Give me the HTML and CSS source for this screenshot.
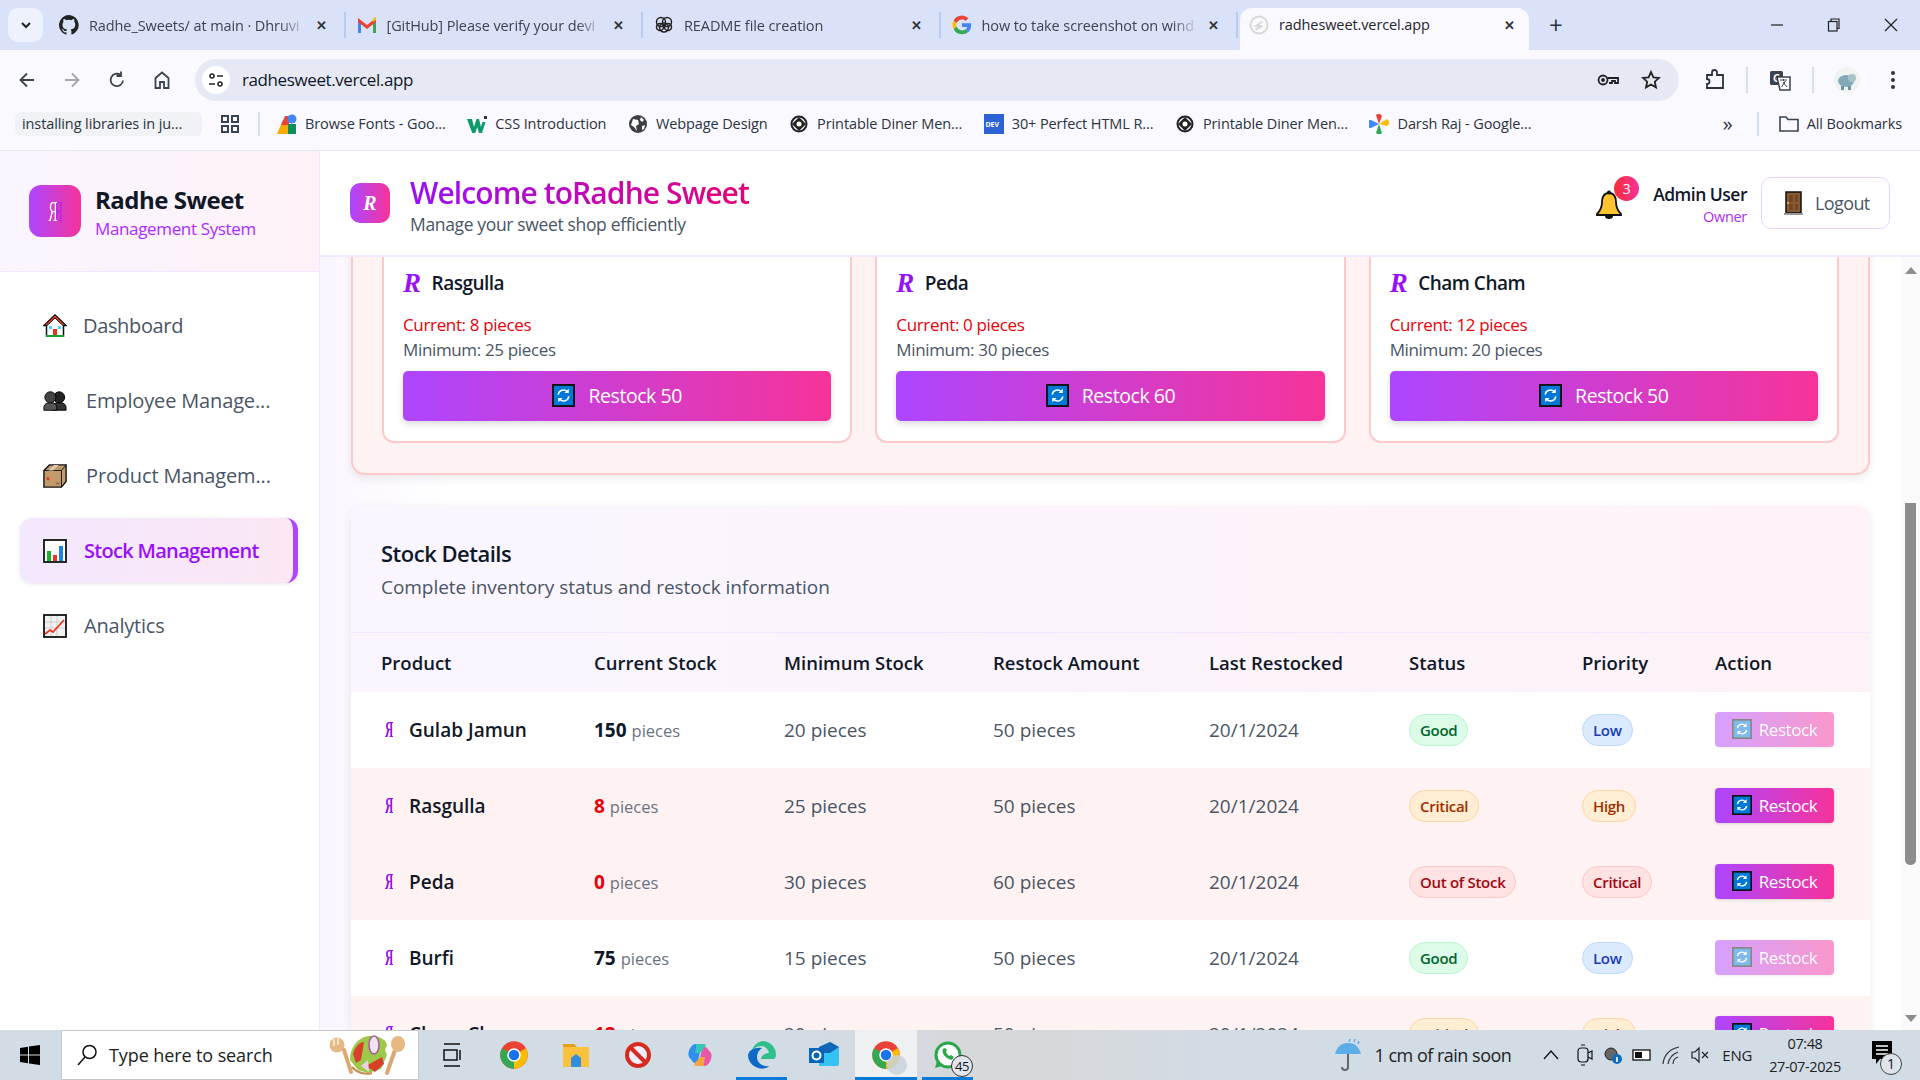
FILE: index.html
```html
<!DOCTYPE html>
<html>

<head>
    <title>Radhe Sweet</title>
    <link rel="stylesheet" href="styles.css">
</head>

<body>
    <svg class="defs" width="0" height="0">
        <symbol id="i-restock" viewBox="0 0 24 24">
            <rect x="1" y="1" width="22" height="22" fill="#0078d7" stroke="#111" stroke-width="2"/>
            <path d="M6.5 11a5.5 5.5 0 0 1 9.5-3M17.5 13a5.5 5.5 0 0 1-9.5 3" fill="none" stroke="#fff" stroke-width="1.6"/>
            <path d="M17.5 5v4.5H13zM6.5 19v-4.5H11z" fill="#fff"/>
        </symbol>
        <symbol id="i-chrome" viewBox="0 0 24 24">
            <circle cx="12" cy="12" r="11" fill="#ea4335"/>
            <path d="M12 12 21.5 6.5A11 11 0 0 1 12 23z" fill="#fbbc04"/>
            <path d="M12 12 12 23A11 11 0 0 1 2.5 6.5z" fill="#34a853"/>
            <circle cx="12" cy="12" r="5.4" fill="#fff"/>
            <circle cx="12" cy="12" r="4.2" fill="#1a73e8"/>
        </symbol>
        <symbol id="i-diner" viewBox="0 0 20 20">
            <circle cx="10" cy="10" r="7.5" fill="none" stroke="#222" stroke-width="2"/>
            <path d="M10 3 17 10 10 17 3 10z" fill="#222"/>
            <circle cx="10" cy="10" r="2.5" fill="#fff"/>
        </symbol>
    </svg>

    <div class="tabstrip">
        <button class="tab-menu"><svg width="14" height="14" viewBox="0 0 14 14"><path d="M3 5l4 4 4-4" fill="none" stroke="#222" stroke-width="2"/></svg></button>
        <div class="tab">
            <svg class="favicon" viewBox="0 0 16 16"><path fill="#222" d="M8 0a8 8 0 0 0-2.5 15.6c.4.1.5-.2.5-.4v-1.4c-2.2.5-2.7-1-2.7-1-.4-.9-.9-1.2-.9-1.2-.7-.5.1-.5.1-.5.8.1 1.2.8 1.2.8.7 1.2 1.9.9 2.3.7.1-.5.3-.9.5-1.1-1.8-.2-3.7-.9-3.700-4 0-.9.3-1.600.8-2.100-.1-.2-.4-1 .1-2.100 0 0 .7-.2 2.200.8a7.600 7.600 0 0 1 4 0c1.500-1 2.200-.8 2.200-.8.400 1.100.2 1.900.1 2.100.5.600.8 1.300.8 2.100 0 3.100-1.900 3.700-3.700 3.900.3.300.6.800.6 1.500v2.200c0 .2.100.5.600.4A8 8 0 0 0 8 0z"/></svg>
            <span class="tab-title">Radhe_Sweets/ at main · Dhruvi</span>
            <span class="tab-close">✕</span>
        </div>
        <div class="tab">
            <svg class="favicon" viewBox="0 0 20 16"><path fill="#4285f4" d="M1 16V3l3 2v11z"/><path fill="#34a853" d="M16 16V5l3-2v13z"/><path fill="#ea4335" d="M1 1l9 7 9-7v4l-9 7-9-7z"/><path fill="#fbbc04" d="M16 1.5 19 0v3l-3 2z"/></svg>
            <span class="tab-title">[GitHub] Please verify your devi</span>
            <span class="tab-close">✕</span>
        </div>
        <div class="tab">
            <svg class="favicon" viewBox="0 0 20 20" fill="none" stroke="#222" stroke-width="1.5"><circle cx="7" cy="7" r="4.5"/><circle cx="13" cy="7" r="4.5"/><circle cx="10" cy="12.5" r="4.5"/><circle cx="6" cy="12" r="3.5"/><circle cx="14" cy="12" r="3.5"/></svg>
            <span class="tab-title">README file creation</span>
            <span class="tab-close">✕</span>
        </div>
        <div class="tab">
            <svg class="favicon" viewBox="0 0 24 24"><path fill="#4285f4" d="M23 12.3c0-.8-.1-1.6-.2-2.3H12v4.3h6.2a5.3 5.3 0 0 1-2.3 3.5l3.6 2.8c2.2-2 3.500-5 3.500-8.300z"/><path fill="#34a853" d="M12 23c3 0 5.500-1 7.500-2.700l-3.600-2.800c-1 .7-2.300 1.100-3.900 1.100-3 0-5.500-2-6.400-4.700l-3.700 2.900A11 11 0 0 0 12 23z"/><path fill="#fbbc04" d="M5.600 13.900a6.600 6.600 0 0 1 0-4.200L1.900 6.800a11 11 0 0 0 0 9.900z"/><path fill="#ea4335" d="M12 5.400c1.700 0 3.200.6 4.300 1.700l3.300-3.200A11 11 0 0 0 1.900 6.800l3.700 2.900C6.500 7.400 9 5.400 12 5.400z"/></svg>
            <span class="tab-title">how to take screenshot on wind</span>
            <span class="tab-close">✕</span>
        </div>
        <div class="tab tab-active">
            <svg class="favicon" viewBox="0 0 20 20" fill="none" stroke="#d8d8d8" stroke-width="2"><circle cx="10" cy="10" r="8.5"/><path d="M13.5 6.5 7 11h6l-6.500 3.500"/></svg>
            <span class="tab-title">radhesweet.vercel.app</span>
            <span class="tab-close">✕</span>
        </div>
        <span class="tab-new">+</span>
        <div class="win-controls">
            <svg width="14" height="14" viewBox="0 0 14 14"><path d="M1 7h12" stroke="#222" stroke-width="1.2"/></svg>
            <svg width="14" height="14" viewBox="0 0 14 14" fill="none" stroke="#222" stroke-width="1.2"><rect x="1.5" y="3.5" width="8.5" height="9.5"/><path d="M4 3.5V1h8v9.5h-2"/></svg>
            <svg width="14" height="14" viewBox="0 0 14 14"><path d="M1 1l12 12M13 1 1 13" stroke="#222" stroke-width="1.2"/></svg>
        </div>
    </div>

    <div class="toolbar">
        <div class="nav-buttons">
            <svg width="20" height="20" viewBox="0 0 20 20" fill="none" stroke="#3c4350" stroke-width="1.8"><path d="M17 10H4M10 3.5 3.5 10l6.500 6.500"/></svg>
            <svg width="20" height="20" viewBox="0 0 20 20" fill="none" stroke="#a3a6ad" stroke-width="1.8"><path d="M3 10h13M10 3.5l6.500 6.500-6.500 6.500"/></svg>
            <svg width="20" height="20" viewBox="0 0 20 20" fill="none" stroke="#3c4350" stroke-width="1.8"><path d="M16 10.5A6.2 6.2 0 1 1 13.5 5"/><path d="M14 1.5V6H9.5" /></svg>
            <svg width="20" height="20" viewBox="0 0 20 20" fill="none" stroke="#3c4350" stroke-width="1.8"><path d="M3.5 18V8L10 2.5 16.5 8v10H12v-6H8v6z"/></svg>
        </div>
        <div class="omnibox">
            <span class="site-info"><svg width="16" height="16" viewBox="0 0 16 16" fill="none" stroke="#222" stroke-width="1.5"><circle cx="4" cy="4" r="2"/><path d="M9 4h6M1 12h6"/><circle cx="12" cy="12" r="2"/></svg></span>
            <span class="url">radhesweet.vercel.app</span>
            <svg class="omni-icon" width="24" height="20" viewBox="0 0 24 20" fill="none" stroke="#222" stroke-width="1.8"><circle cx="7" cy="10" r="4.5"/><circle cx="7" cy="10" r="1"/><path d="M11.5 8H22v5h-3v-2h-3v2h-3"/></svg>
            <svg class="omni-icon" width="20" height="20" viewBox="0 0 20 20" fill="none" stroke="#222" stroke-width="1.8"><path d="M10 2l2.400 5.300 5.600.6-4.200 3.800 1.200 5.700-5-2.900-5 2.900 1.200-5.700L2 7.900l5.600-.6z"/></svg>
        </div>
        <div class="browser-actions">
            <svg width="22" height="22" viewBox="0 0 22 22" fill="none" stroke="#2c3340" stroke-width="1.8"><path d="M3 6h5V3.500a2 2 0 0 1 5 0V6h6v13H3v-4a2.500 2.500 0 0 0 0-5z"/></svg>
            <i class="action-sep"></i>
            <svg width="24" height="24" viewBox="0 0 24 24"><rect x="2" y="3" width="13" height="14" rx="1.5" fill="#3c4350"/><text class="svg-label" x="5" y="14" fill="#fff">G</text><path d="M9 9h13v13H12z" fill="#fff" stroke="#3c4350" stroke-width="1.5"/><path d="M12 12h7M15.5 11v2M13.5 19l4-6M15 14l4 5" stroke="#3c4350" fill="none"/></svg>
            <i class="action-sep"></i>
            <svg width="26" height="26" viewBox="0 0 26 26"><circle cx="13" cy="13" r="13" fill="#f1f3f1"/><ellipse cx="12" cy="14" rx="8" ry="6" fill="#83a9b8"/><circle cx="18" cy="11" r="4" fill="#a9c4c9"/><path d="M7 19h3v4H7zM14 19h3v4h-3z" fill="#6c94a6"/></svg>
            <svg class="menu-dots" width="6" height="20" viewBox="0 0 6 20" fill="#2c3340"><circle cx="3" cy="3" r="2"/><circle cx="3" cy="10" r="2"/><circle cx="3" cy="17" r="2"/></svg>
        </div>
    </div>

    <div class="bookmarks">
        <span class="bm-chip">installing libraries in ju...</span>
        <svg class="bm-apps" width="20" height="20" viewBox="0 0 20 20" fill="none" stroke="#3c4350" stroke-width="2"><rect x="2" y="2" width="6" height="6"/><rect x="12" y="2" width="6" height="6"/><rect x="2" y="12" width="6" height="6"/><rect x="12" y="12" width="6" height="6"/></svg>
        <i class="bm-sep"></i>
        <span class="bm"><svg class="bm-icon" viewBox="0 0 20 20"><path d="M0 20 6 6h5v14z" fill="#f9ab00"/><path d="M4 11 8 2h4v9z" fill="#ea4335"/><circle cx="15" cy="5" r="4.5" fill="#4285f4"/><path d="M11 10h8v10h-8z" fill="#0d8e5b"/></svg>Browse Fonts - Goo...</span>
        <span class="bm"><svg class="bm-icon" viewBox="0 0 20 20"><path d="M0 5h5l2 8 2.500-8h2.500l2 8 1.500-5h3l-3.500 11h-3l-1.800-6-2 6h-3z" fill="#0d9a6a"/><path d="M17 2h3v3h-3z" fill="#333"/></svg>CSS Introduction</span>
        <span class="bm"><svg class="bm-icon" viewBox="0 0 20 20"><circle cx="10" cy="10" r="9" fill="#3c4043"/><path d="M5 5l5 1 1 4-3 2 1 5-3-4-3-2zM13 3l3 3-2 2-2-2zM14 12l3-1-1 4-2 1z" fill="#fff"/></svg>Webpage Design</span>
        <span class="bm"><svg class="bm-icon"><use href="#i-diner"/></svg>Printable Diner Men...</span>
        <span class="bm"><svg class="bm-icon" viewBox="0 0 20 20"><rect width="20" height="20" fill="#2f62d6"/><text class="svg-dev" x="1.5" y="13" fill="#fff">DEV</text></svg>30+ Perfect HTML R...</span>
        <span class="bm"><svg class="bm-icon"><use href="#i-diner"/></svg>Printable Diner Men...</span>
        <span class="bm"><svg class="bm-icon" viewBox="0 0 20 20"><path d="M10 10 7 1a4 4 0 0 1 6 1z" fill="#ea4335"/><path d="M10 10l8-5a4 4 0 0 1 0 7z" fill="#fbbc04"/><path d="M10 10l3 9a4 4 0 0 1-6 0z" fill="#34a853"/><path d="M10 10 2 14a4 4 0 0 1 0-8z" fill="#4285f4"/></svg>Darsh Raj - Google...</span>
        <span class="bm-more">»</span>
        <i class="bm-sep bm-sep-end"></i>
        <span class="bm bm-all"><svg class="bm-icon" viewBox="0 0 20 20" fill="none" stroke="#3c4350" stroke-width="1.6"><path d="M1 17V3h6l2 2.500h10V17z"/></svg>All Bookmarks</span>
    </div>

    <div class="app">
        <aside class="sidebar">
            <div class="side-head">
                <div class="side-logo"><span class="mark-mirror">Я</span></div>
                <div class="side-titles">
                    <div class="side-name">Radhe Sweet</div>
                    <div class="side-sub">Management System</div>
                </div>
            </div>
            <nav class="side-nav">
                <a class="nav-item">
                    <svg class="nav-icon" viewBox="0 0 24 24"><path d="M12 1 1 11.5h2.500V22h17V11.500H23z" fill="#fff" stroke="#111" stroke-width="1.5"/><path d="M12 1 1 11.500h3L12 4l8 7.500h3z" fill="#e5371f" stroke="#111"/><path d="M10 15h4v7h-4z" fill="#e5371f"/><path d="M6 12h3v3H6zM15 12h3v3h-3z" fill="#53d3f5"/><path d="M3 21h18v2H3z" fill="#17a02f"/></svg>
                    <span>Dashboard</span>
                </a>
                <a class="nav-item nav-wide">
                    <svg class="nav-icon" viewBox="0 0 26 24"><circle cx="17.5" cy="8" r="6" fill="#222" stroke="#000"/><path d="M10 22v-4a6 6 0 0 1 6-4h4a5 5 0 0 1 5 5v3z" fill="#333" stroke="#000"/><circle cx="8" cy="8" r="6" fill="#444" stroke="#000"/><path d="M1 22v-4a6 6 0 0 1 6-4h3a5 5 0 0 1 5 5v3z" fill="#555" stroke="#000"/></svg>
                    <span>Employee Manage...</span>
                </a>
                <a class="nav-item nav-wide">
                    <svg class="nav-icon" viewBox="0 0 26 26"><path d="M1 7 7 1h18v18l-5 6H1z" fill="#c49a6c" stroke="#111" stroke-width="1.5"/><path d="M1 7h19v18M20 7l5-6" fill="none" stroke="#111"/><path d="M6 7l6-6h5l-6 6z" fill="#d9cdb8"/><path d="M4 14l3 1v3l-3-1z" fill="#e5371f"/><path d="M14 20h4v2h-4z" fill="#8a6a47"/></svg>
                    <span>Product Managem...</span>
                </a>
                <a class="nav-item nav-active">
                    <svg class="nav-icon" viewBox="0 0 24 24"><rect x="1" y="1" width="22" height="22" fill="#fff" stroke="#111" stroke-width="1.8"/><path d="M4 12h4v10H4z" fill="#17b12e"/><path d="M10 16h4v6h-4z" fill="#e5371f"/><path d="M16 7h4v15h-4z" fill="#1a86e0"/></svg>
                    <span>Stock Management</span>
                </a>
                <a class="nav-item nav-last">
                    <svg class="nav-icon" viewBox="0 0 24 24"><rect x="1" y="1" width="22" height="22" fill="#f2f2f2" stroke="#111" stroke-width="1.8"/><path d="M2 8h20M2 14h20M8 2v20M14 2v20" stroke="#ccc"/><path d="M2 20l5-4 3 2 11-12" fill="none" stroke="#e5371f" stroke-width="1.8"/></svg>
                    <span>Analytics</span>
                </a>
            </nav>
        </aside>

        <div class="main">
            <header class="topbar">
                <div class="top-logo">R</div>
                <div class="top-titles">
                    <h1 class="top-title">Welcome toRadhe Sweet</h1>
                    <div class="top-sub">Manage your sweet shop efficiently</div>
                </div>
                <div class="bell">
                    <svg width="28" height="30" viewBox="0 0 28 30"><path d="M14 3c-5 0-7 4-7 9 0 5-2 9-5 12v1h24v-1c-3-3-5-7-5-12 0-5-2-9-7-9z" fill="#fdc32e" stroke="#111" stroke-width="1.8"/><path d="M10 26a4 3 0 0 0 8 0z" fill="#111"/><circle cx="14" cy="2.5" r="2" fill="#111"/></svg>
                    <span class="bell-badge">3</span>
                </div>
                <div class="user">
                    <div class="user-name">Admin User</div>
                    <div class="user-role">Owner</div>
                </div>
                <button class="logout">
                    <svg width="19" height="24" viewBox="0 0 19 24"><path d="M2 1h15v21H2z" fill="#8a5a33" stroke="#111" stroke-width="1.5"/><path d="M5 4h4v7H5zM11 4h3v7h-3zM5 13h4v6H5zM11 13h3v6h-3z" fill="#734623"/><circle cx="4" cy="12" r="1" fill="#f5c242"/><path d="M0 22h19v2H0z" fill="#9a9a9a"/></svg>
                    Logout
                </button>
            </header>

            <div class="body-row">
                <div class="content">
                    <section class="alerts">
                        <div class="alert-card">
                            <div class="alert-name"><span class="alert-r">R</span>Rasgulla</div>
                            <div class="alert-current">Current: 8 pieces</div>
                            <div class="alert-min">Minimum: 25 pieces</div>
                            <button class="alert-btn"><svg class="btn-icon"><use href="#i-restock"/></svg>Restock 50</button>
                        </div>
                        <div class="alert-card">
                            <div class="alert-name"><span class="alert-r">R</span>Peda</div>
                            <div class="alert-current">Current: 0 pieces</div>
                            <div class="alert-min">Minimum: 30 pieces</div>
                            <button class="alert-btn"><svg class="btn-icon"><use href="#i-restock"/></svg>Restock 60</button>
                        </div>
                        <div class="alert-card">
                            <div class="alert-name"><span class="alert-r">R</span>Cham Cham</div>
                            <div class="alert-current">Current: 12 pieces</div>
                            <div class="alert-min">Minimum: 20 pieces</div>
                            <button class="alert-btn"><svg class="btn-icon"><use href="#i-restock"/></svg>Restock 50</button>
                        </div>
                    </section>

                    <section class="stock">
                        <div class="stock-head">
                            <h2 class="stock-title">Stock Details</h2>
                            <p class="stock-sub">Complete inventory status and restock information</p>
                        </div>
                        <table class="stock-table">
                            <thead>
                                <tr>
                                    <th class="col-product">Product</th>
                                    <th class="col-current">Current Stock</th>
                                    <th class="col-min">Minimum Stock</th>
                                    <th class="col-amount">Restock Amount</th>
                                    <th class="col-last">Last Restocked</th>
                                    <th class="col-status">Status</th>
                                    <th class="col-priority">Priority</th>
                                    <th>Action</th>
                                </tr>
                            </thead>
                            <tbody>
                                <tr>
                                    <td><span class="prod"><span class="prod-mark">Я</span>Gulab Jamun</span></td>
                                    <td><b class="qty">150</b> <span class="unit">pieces</span></td>
                                    <td>20 pieces</td>
                                    <td>50 pieces</td>
                                    <td>20/1/2024</td>
                                    <td><span class="pill pill-green">Good</span></td>
                                    <td><span class="pill pill-blue">Low</span></td>
                                    <td><button class="row-btn row-btn-off"><svg class="row-icon"><use href="#i-restock"/></svg>Restock</button></td>
                                </tr>
                                <tr class="row-low">
                                    <td><span class="prod"><span class="prod-mark">Я</span>Rasgulla</span></td>
                                    <td><b class="qty qty-low">8</b> <span class="unit">pieces</span></td>
                                    <td>25 pieces</td>
                                    <td>50 pieces</td>
                                    <td>20/1/2024</td>
                                    <td><span class="pill pill-orange">Critical</span></td>
                                    <td><span class="pill pill-orange">High</span></td>
                                    <td><button class="row-btn"><svg class="row-icon"><use href="#i-restock"/></svg>Restock</button></td>
                                </tr>
                                <tr class="row-low">
                                    <td><span class="prod"><span class="prod-mark">Я</span>Peda</span></td>
                                    <td><b class="qty qty-low">0</b> <span class="unit">pieces</span></td>
                                    <td>30 pieces</td>
                                    <td>60 pieces</td>
                                    <td>20/1/2024</td>
                                    <td><span class="pill pill-red">Out of Stock</span></td>
                                    <td><span class="pill pill-red">Critical</span></td>
                                    <td><button class="row-btn"><svg class="row-icon"><use href="#i-restock"/></svg>Restock</button></td>
                                </tr>
                                <tr>
                                    <td><span class="prod"><span class="prod-mark">Я</span>Burfi</span></td>
                                    <td><b class="qty">75</b> <span class="unit">pieces</span></td>
                                    <td>15 pieces</td>
                                    <td>50 pieces</td>
                                    <td>20/1/2024</td>
                                    <td><span class="pill pill-green">Good</span></td>
                                    <td><span class="pill pill-blue">Low</span></td>
                                    <td><button class="row-btn row-btn-off"><svg class="row-icon"><use href="#i-restock"/></svg>Restock</button></td>
                                </tr>
                                <tr class="row-low">
                                    <td><span class="prod"><span class="prod-mark">Я</span>Cham Cham</span></td>
                                    <td><b class="qty qty-low">12</b> <span class="unit">pieces</span></td>
                                    <td>20 pieces</td>
                                    <td>50 pieces</td>
                                    <td>20/1/2024</td>
                                    <td><span class="pill pill-orange">Critical</span></td>
                                    <td><span class="pill pill-orange">High</span></td>
                                    <td><button class="row-btn"><svg class="row-icon"><use href="#i-restock"/></svg>Restock</button></td>
                                </tr>
                            </tbody>
                        </table>
                    </section>
                </div>
                <div class="scrollbar">
                    <i class="arrow-up"></i>
                    <div class="scroll-track"><div class="scroll-thumb"></div></div>
                    <i class="arrow-down"></i>
                </div>
            </div>
        </div>
    </div>

    <div class="taskbar">
        <svg class="win-logo" width="20" height="20" viewBox="0 0 20 20" fill="#000"><path d="M0 3l8-1.200v7.700H0zM9 1.600 20 0v9.500H9zM0 10.500h8v7.700L0 17zM9 10.500h11V20L9 18.400z"/></svg>
        <div class="search">
            <svg width="24" height="24" viewBox="0 0 24 24" fill="none" stroke="#111" stroke-width="1.5"><circle cx="14.5" cy="9" r="6.5"/><path d="M10 14 3 22"/></svg>
            <span class="search-text">Type here to search</span>
            <svg class="search-art" width="90" height="50" viewBox="0 0 90 50">
                <path d="M20 20 27 42" stroke="#dba873" stroke-width="4" stroke-linecap="round"/>
                <circle cx="13" cy="15" r="7.5" fill="#e6b884"/>
                <path d="M10 9v7M14 8v7" stroke="#fff" stroke-width="1.2"/>
                <path d="M71 20 63 43" stroke="#dba873" stroke-width="4" stroke-linecap="round"/>
                <ellipse cx="74" cy="14" rx="7" ry="8" fill="#e6b884"/>
                <path d="M26 30C26 16 36 5 48 6c6 0 14 3 15 9l-2 5 2 5-6 14-13 4-10-3z" fill="#9cc94a"/>
                <path d="M29 24c2-8 7-12 11-12l-3 18-5 3z" fill="#d8402a"/>
                <path d="M42 36l16-9 2 7-9 8z" fill="#d8402a"/>
                <ellipse cx="50" cy="15" rx="5" ry="9" fill="#f1e3ef" stroke="#a55c9a" stroke-width="1.5"/>
                <path d="M37 36l7-6 1 12z" fill="#e9d4e6"/>
                <path d="M28 37c5 6 14 8 20 6" fill="none" stroke="#c98b52" stroke-width="2"/>
            </svg>
        </div>
        <div class="task-apps">
            <span class="task-app"><svg width="22" height="26" viewBox="0 0 22 26" fill="none" stroke="#111" stroke-width="1.5"><path d="M3 2h16M3 24h16M3 8h13v10H3zM19 8v10"/></svg></span>
            <span class="task-app"><svg width="30" height="30"><use href="#i-chrome"/></svg></span>
            <span class="task-app"><svg width="28" height="28" viewBox="0 0 28 28"><path d="M1 3h11l3 3h12v20H1z" fill="#fcc23d"/><path d="M1 3h11l3 3H1z" fill="#e2a017"/><path d="M9 26V17l5-4 5 4v9z" fill="#2f8fdc"/></svg></span>
            <span class="task-app"><svg width="28" height="28" viewBox="0 0 28 28" fill="none" stroke="#d62c20" stroke-width="4"><circle cx="14" cy="14" r="11" fill="#eef"/><path d="M6 6l16 16"/></svg></span>
            <span class="task-app"><svg width="28" height="28" viewBox="0 0 28 28"><path d="M3 16C1 11 5 3 10 3c3 0 8 0 9 2l-5 6-2 9c-1 3-4 2-5 1z" fill="#2f8ef0"/><path d="M25 12c2 5-2 13-7 13-3 0-8 0-9-2l5-6 2-9c1-3 4-2 5-1z" fill="#e957a8"/><path d="M10 3h8c2 0 2 2 1 3l-5 6H9c1-3 1-7 1-9z" fill="#36c6b8"/><path d="M18 25h-8c-2 0-2-2-1-3l5-6h5c-1 3-1 7-1 9z" fill="#f7a63c"/></svg></span>
            <span class="task-app task-open"><svg width="30" height="30" viewBox="0 0 30 30"><path d="M15 1a14 14 0 0 1 14 14c0 2-1 4-3 4H14c0-3 4-6 8-6-1-4-4-7-8-7-5 0-9 4-10 8A14 14 0 0 1 15 1z" fill="#2ebf8f"/><path d="M1 15a14 14 0 0 0 22 11c-6 1-13-2-13-9 0-4 2-7 5-9C8 7 2 10 1 15z" fill="#0c69c5"/></svg></span>
            <span class="task-app"><svg width="32" height="28" viewBox="0 0 32 28"><path d="M11 6 22 1l9 5v17a2 2 0 0 1-2 2H11z" fill="#35c3f3"/><path d="M11 6 22 1l9 5-9 6H11z" fill="#1166b8"/><rect x="1" y="7" width="15" height="15" fill="#0a64bd"/><circle cx="8.5" cy="14.5" r="4" fill="none" stroke="#fff" stroke-width="2"/></svg></span>
            <span class="task-app task-open task-active"><svg width="30" height="30"><use href="#i-chrome"/></svg><i class="task-thumb"></i></span>
            <span class="task-app task-open"><svg width="30" height="30" viewBox="0 0 30 30"><circle cx="15" cy="15" r="12" fill="#fff" stroke="#2aa84a" stroke-width="3"/><path d="M2 28l2-7 5 5z" fill="#2aa84a"/><path d="M10 9c-2 3 2 10 9 11l2-3-3-2-2 1c-1-1-2-2-3-4l1-2-2-2z" fill="#2aa84a"/></svg><span class="task-count">45</span></span>
        </div>
        <div class="tray">
            <svg class="tray-rain" width="28" height="34" viewBox="0 0 28 34"><path d="M1 16C3 8 8 5 14 5s11 3 13 11z" fill="#5daee8"/><path d="M14 16v13a3 3 0 0 1-6 0" fill="none" stroke="#666" stroke-width="2"/><path d="M16 1l-1 3M21 1l-1 3M25 3l-1 3" stroke="#5daee8" stroke-width="1.5"/></svg>
            <span class="rain-text">1 cm of rain soon</span>
            <svg class="tray-caret" width="18" height="12" viewBox="0 0 18 12" fill="none" stroke="#111" stroke-width="1.3"><path d="M2 10l7-8 7 8"/></svg>
            <svg width="18" height="22" viewBox="0 0 18 22" fill="none" stroke="#111" stroke-width="1.2"><rect x="2" y="4" width="10" height="14" rx="3"/><path d="M12 9l4-2v8l-4-2M5 1h4M5 21h4"/></svg>
            <svg width="20" height="22" viewBox="0 0 20 22"><circle cx="8" cy="10" r="6" fill="#666" stroke="#222"/><circle cx="14" cy="15" r="5" fill="#0f6cbd"/><path d="M14 13v5" stroke="#fff" stroke-width="1.6"/></svg>
            <svg width="20" height="14" viewBox="0 0 20 14"><rect x="1" y="2" width="17" height="10" fill="#fff" stroke="#111" stroke-width="1.3"/><rect x="3" y="4" width="7" height="6" fill="#111"/></svg>
            <svg width="20" height="20" viewBox="0 0 20 20" fill="none" stroke="#333" stroke-width="1.2"><path d="M2 19C3 10 9 4 18 2M7 19c1-6 5-10 10-12M12 19c0-3 2-6 5-7"/></svg>
            <svg width="20" height="20" viewBox="0 0 20 20" fill="none" stroke="#222" stroke-width="1.2"><path d="M2 7h3l4-4v14l-4-4H2zM12 7l6 6M18 7l-6 6"/></svg>
            <span class="tray-lang">ENG</span>
            <div class="clock">
                <div>07:48</div>
                <div>27-07-2025</div>
            </div>
            <span class="notif">
                <svg width="20" height="24" viewBox="0 0 20 24"><path d="M0 0h20v18H8l-4 5v-5H0z" fill="#000"/><path d="M4 5h12M4 9h12M4 13h12" stroke="#fff" stroke-width="1.5"/></svg>
                <span class="notif-count">1</span>
            </span>
        </div>
    </div>
</body>

</html>
```

FILE: styles.css
```css
* {
    box-sizing: border-box;
}

html,
body {
    margin: 0;
    height: 100%;
    overflow: hidden;
}

body {
    display: flex;
    flex-direction: column;
    height: 100vh;
    font-family: "Open Sans", "Noto Sans", sans-serif;
    color: #101828;
}

.defs {
    position: absolute;
}

button {
    font-family: inherit;
    border: 0;
}

h1,
h2,
p {
    margin: 0;
}

/* browser chrome */
.tabstrip {
    display: flex;
    align-items: flex-end;
    height: 50px;
    flex: none;
    padding-left: 8px;
    background: #d9e2f8;
}

.tab-menu {
    display: flex;
    align-items: center;
    justify-content: center;
    width: 35px;
    height: 34px;
    margin: 0 5px 8px 0;
    border-radius: 10px;
    background: #eef2fd;
}

.tab {
    display: flex;
    align-items: center;
    gap: 10px;
    width: 297.5px;
    height: 26px;
    margin-bottom: 12px;
    padding: 0 17px 0 11px;
    border-right: 2px solid #b8ccf2;
    font-size: 14.5px;
    letter-spacing: -0.1px;
    color: #3c4350;
}

.favicon {
    flex: none;
    width: 20px;
    height: 20px;
}

.tab-title {
    flex: 1;
    overflow: hidden;
    white-space: nowrap;
    mask-image: linear-gradient(to right, #000 88%, transparent);
}

.tab-close {
    flex: none;
    font-size: 13px;
    font-weight: 600;
    color: #333;
}

.tab-active {
    width: 289px;
    height: 42px;
    margin: 0 0 0 2px;
    padding: 0 14px 9px 9px;
    border: 0;
    border-radius: 12px 12px 0 0;
    background: #f9f9ff;
    color: #1f2430;
}

.tab-active .tab-title {
    mask-image: none;
}

.tab-new {
    margin: 0 0 10px 20px;
    font-size: 24px;
    line-height: 30px;
    color: #2c3340;
}

.win-controls {
    display: flex;
    gap: 43px;
    margin: 0 22px 18px auto;
}

.toolbar {
    display: flex;
    align-items: center;
    flex: none;
    height: 60px;
    padding: 0 18px 0 17px;
    background: #f9f9ff;
}

.nav-buttons {
    display: flex;
    gap: 25px;
    margin-right: 23px;
}

.omnibox {
    display: flex;
    align-items: center;
    gap: 21px;
    width: 1484px;
    height: 42px;
    padding: 0 18px 0 7px;
    border-radius: 21px;
    background: #e6e9f4;
}

.site-info {
    display: flex;
    align-items: center;
    justify-content: center;
    width: 28px;
    height: 28px;
    margin-right: -9px;
    border-radius: 50%;
    background: #fff;
}

.url {
    flex: 1;
    padding-bottom: 2px;
    font-size: 17px;
    letter-spacing: -0.4px;
}

.browser-actions {
    display: flex;
    align-items: center;
    gap: 20px;
    margin-left: 25px;
}

.menu-dots {
    margin-left: 10px;
}

.action-sep {
    width: 2px;
    height: 26px;
    background: #d4e0f5;
}

.svg-label {
    font-size: 10px;
    font-weight: 700;
}

.svg-dev {
    font-size: 7px;
    font-weight: 700;
}

.bookmarks {
    display: flex;
    align-items: center;
    flex: none;
    height: 40px;
    padding: 0 18px 13px 15px;
    background: #f9f9ff;
    font-size: 14.5px;
    letter-spacing: -0.1px;
    color: #2c3340;
}

.bm-chip {
    width: 187px;
    padding: 2px 0 3px 7px;
    margin-right: 18px;
    border-radius: 6px;
    background: #f0f2f5;
    white-space: nowrap;
}

.bm-apps {
    margin-right: 18px;
}

.bm-sep {
    width: 2px;
    height: 24px;
    margin-right: 17px;
    background: #d4e0f5;
}

.bm {
    display: flex;
    align-items: center;
    gap: 8px;
    margin-right: 21.5px;
    white-space: nowrap;
}

.bm-icon {
    flex: none;
    width: 20px;
    height: 20px;
}

.bm-more {
    margin-left: auto;
    margin-right: 24px;
    font-size: 20px;
    line-height: 20px;
}

.bm-sep-end {
    margin-right: 20px;
}

.bm-all {
    margin-right: 0;
}

/* app shell */
.app {
    display: flex;
    flex: 1;
    min-height: 0;
    border-top: 1px solid #e4e6f0;
}

.sidebar {
    flex: none;
    width: 320px;
    border-right: 1px solid #f3e8ff;
    background: #fff;
}

.side-head {
    display: flex;
    align-items: center;
    gap: 14px;
    height: 121px;
    padding: 0 0 0 29px;
    border-bottom: 1px solid #f3e8ff;
    background: linear-gradient(to right, #faf5ff, #fdf2f8);
}

.side-logo {
    display: flex;
    align-items: center;
    justify-content: center;
    width: 52px;
    height: 52px;
    border-radius: 12px;
    background: linear-gradient(to right, #ad46ff, #f6339a);
}

.mark-mirror {
    display: inline-block;
    margin-left: -4px;
    font-family: "Liberation Serif", serif;
    font-size: 30px;
    line-height: 30px;
    color: #fff;
    transform: scaleX(0.45);
    text-shadow: 12px 0 0 rgba(152, 16, 250, 0.55);
}

.side-titles {
    padding-top: 4px;
}

.side-name {
    font-size: 24px;
    font-weight: 700;
    line-height: 32px;
    letter-spacing: -0.5px;
}

.side-sub {
    font-size: 17px;
    line-height: 26px;
    letter-spacing: -0.35px;
    color: #ad2bff;
}

.side-nav {
    display: flex;
    flex-direction: column;
    gap: 10px;
    padding: 21px 21px 0 20px;
}

.nav-item {
    display: flex;
    align-items: center;
    gap: 16px;
    height: 65px;
    padding-left: 23px;
    font-size: 20px;
    font-weight: 500;
    letter-spacing: -0.35px;
    color: #4a5565;
    white-space: nowrap;
}

.nav-wide {
    gap: 19px;
    letter-spacing: -0.15px;
}

.nav-last {
    gap: 17px;
    letter-spacing: -0.2px;
}

.nav-icon {
    flex: none;
    width: 24px;
    height: 24px;
}

.nav-active {
    gap: 17px;
    border-right: 5px solid #ad46ff;
    border-radius: 12px;
    background: linear-gradient(to right, #f3e8ff, #fce7f3);
    box-shadow: 0 1px 4px rgba(0, 0, 0, 0.1);
    font-weight: 600;
    letter-spacing: -0.7px;
    color: #9810fa;
}

.main {
    display: flex;
    flex-direction: column;
    flex: 1;
    min-width: 0;
    background: #fff;
}

.topbar {
    position: relative;
    z-index: 2;
    display: flex;
    align-items: center;
    flex: none;
    height: 106px;
    padding: 0 30px;
    border-bottom: 2px solid #f3e8ff;
    background: #fff;
}

.top-logo {
    display: flex;
    align-items: center;
    justify-content: center;
    width: 40px;
    height: 40px;
    margin-right: 20px;
    border-radius: 10px;
    background: linear-gradient(to right, #ad46ff, #f6339a);
    font-family: "Liberation Serif", serif;
    font-size: 20px;
    font-style: italic;
    font-weight: 700;
    color: #fff;
}

.top-titles {
    flex: 1;
    padding-top: 4px;
}

.top-title {
    width: max-content;
    font-size: 30px;
    font-weight: 600;
    line-height: 38px;
    letter-spacing: -0.9px;
    background: linear-gradient(to right, #9810fa, #e60076);
    -webkit-background-clip: text;
    background-clip: text;
    color: transparent;
}

.top-sub {
    font-size: 17.5px;
    line-height: 24px;
    letter-spacing: -0.35px;
    color: #4a5565;
}

.bell {
    position: relative;
    width: 30px;
    height: 32px;
    margin: 5px 28px 0 0;
}

.bell-badge {
    position: absolute;
    top: -14px;
    left: 19px;
    width: 25px;
    height: 25px;
    border-radius: 50%;
    background: linear-gradient(to right, #fb2c36, #f6339a);
    font-size: 14px;
    line-height: 25px;
    text-align: center;
    color: #fff;
}

.user {
    margin: 4px 14px 0 0;
    text-align: right;
}

.user-name {
    font-size: 17.5px;
    font-weight: 600;
    line-height: 24px;
    letter-spacing: -0.5px;
}

.user-role {
    font-size: 14.5px;
    line-height: 22px;
    letter-spacing: -0.3px;
    color: #ad2bff;
}

.logout {
    display: flex;
    align-items: center;
    gap: 12px;
    width: 129px;
    height: 52px;
    padding-left: 22px;
    border: 1.5px solid #e9d4ff;
    border-radius: 10px;
    background: #fff;
    font-size: 18px;
    letter-spacing: -0.6px;
    color: #4a5565;
}

.body-row {
    display: flex;
    flex: 1;
    min-height: 0;
}

.content {
    flex: 1;
    min-width: 0;
    overflow: hidden;
    padding: 0 31px;
    background: linear-gradient(to right, #faf5ff, #fff 8%);
}

/* pulled up: the page is scrolled under the top bar */
.alerts {
    display: grid;
    grid-template-columns: repeat(3, 1fr);
    gap: 23px;
    margin-top: -16px;
    padding: 0 29px 30px;
    border: 2px solid #ffc9c9;
    border-top: 0;
    border-radius: 0 0 14px 14px;
    background: #fef2f2;
    box-shadow: 0 4px 8px rgba(0, 0, 0, 0.08);
}

.alert-card {
    padding: 20px 19px;
    border: 2px solid #ffc9c9;
    border-top: 0;
    border-radius: 0 0 12px 12px;
    background: #fff;
}

.alert-name {
    display: flex;
    align-items: center;
    gap: 11px;
    height: 44px;
    margin-bottom: 6.5px;
    font-size: 19px;
    font-weight: 600;
    letter-spacing: -0.5px;
}

.alert-r {
    font-family: "Liberation Serif", serif;
    font-size: 27px;
    font-style: italic;
    font-weight: 700;
    color: #9810fa;
}

.alert-current,
.alert-min {
    font-size: 17px;
    line-height: 25.5px;
    letter-spacing: -0.35px;
    color: #4a5565;
}

.alert-current {
    color: #e7000b;
}

.alert-btn {
    display: flex;
    align-items: center;
    justify-content: center;
    gap: 13px;
    width: 100%;
    height: 50px;
    margin-top: 8px;
    border-radius: 5px;
    background: linear-gradient(to right, #ad46ff, #f6339a);
    box-shadow: 0 3px 6px rgba(0, 0, 0, 0.15);
    font-size: 19.5px;
    letter-spacing: -0.45px;
    color: #fff;
}

.btn-icon {
    width: 23px;
    height: 23px;
}

.stock {
    margin-top: 31px;
    border-radius: 12px 12px 0 0;
    background: #fff;
    box-shadow: 0 2px 10px rgba(0, 0, 0, 0.08);
}

.stock-head {
    height: 127px;
    padding: 30px 30px 0;
    border-bottom: 1px solid #f3e8ff;
    border-radius: 12px 12px 0 0;
    background: linear-gradient(to right, #faf5ff, #fdf2f8);
}

.stock-title {
    font-size: 22px;
    font-weight: 600;
    line-height: 34px;
    letter-spacing: -0.5px;
}

.stock-sub {
    margin-top: 3px;
    font-size: 19px;
    line-height: 28px;
    letter-spacing: -0.05px;
    color: #4a5565;
}

.stock-table {
    width: 100%;
    table-layout: fixed;
    border-collapse: collapse;
}

.stock-table thead {
    background: linear-gradient(to right, #faf5ff, #fdf2f8);
}

.stock-table th {
    height: 59px;
    padding: 0 0 0 30px;
    font-size: 18.5px;
    font-weight: 600;
    text-align: left;
}

.col-product {
    width: 213px;
}

.col-current {
    width: 190px;
}

.col-min {
    width: 209px;
}

.col-amount {
    width: 216px;
}

.col-last {
    width: 200px;
}

.col-status {
    width: 173px;
}

.col-priority {
    width: 133px;
}

.stock-table td {
    height: 76px;
    padding: 0 0 0 30px;
    font-size: 19px;
    color: #4a5565;
    white-space: nowrap;
}

.row-low {
    background: #fef2f2;
}

.prod {
    display: flex;
    align-items: center;
    gap: 12px;
    font-weight: 600;
    color: #101828;
}

.prod-mark {
    width: 16px;
    font-family: "Liberation Serif", serif;
    font-size: 23px;
    font-weight: 700;
    text-align: center;
    color: #9810fa;
    transform: scaleX(0.5);
}

.qty {
    font-weight: 700;
    color: #101828;
}

.qty-low {
    color: #e7000b;
}

.unit {
    font-size: 16.5px;
    color: #6a7282;
}

.pill {
    display: inline-block;
    height: 32px;
    padding: 0 10px;
    border: 1px solid;
    border-radius: 16px;
    font-size: 15px;
    font-weight: 600;
    line-height: 31px;
    letter-spacing: -0.3px;
}

.pill-green {
    border-color: #b9f8cf;
    background: #dcfce7;
    color: #016630;
}

.pill-blue {
    border-color: #bedbff;
    background: #dbeafe;
    color: #193cb8;
}

.pill-orange {
    border-color: #ffd6a8;
    background: #ffedd4;
    color: #9f2d00;
}

.pill-red {
    border-color: #ffc9c9;
    background: #ffe2e2;
    color: #9f0712;
}

.row-btn {
    display: flex;
    align-items: center;
    justify-content: center;
    gap: 7px;
    width: 119px;
    height: 35px;
    margin-top: -1px;
    border-radius: 4px;
    background: linear-gradient(to right, #ad46ff, #f6339a);
    box-shadow: 0 1px 3px rgba(0, 0, 0, 0.15);
    font-size: 17px;
    letter-spacing: -0.4px;
    color: #fff;
}

.row-btn-off {
    opacity: 0.5;
}

.row-icon {
    width: 20px;
    height: 20px;
}

.scrollbar {
    display: flex;
    flex-direction: column;
    align-items: center;
    flex: none;
    width: 19px;
    padding: 10px 0 8px;
    background: #fafafa;
}

.arrow-up {
    border: 6px solid transparent;
    border-top: 0;
    border-bottom: 7px solid #8d8d8d;
}

.arrow-down {
    border: 6px solid transparent;
    border-bottom: 0;
    border-top: 7px solid #8d8d8d;
}

.scroll-track {
    flex: 1;
    width: 11px;
    padding-top: 229px;
}

.scroll-thumb {
    width: 100%;
    height: 362px;
    border-radius: 0 0 5px 5px;
    background: #8d8d8d;
}

/* windows taskbar */
.taskbar {
    display: flex;
    align-items: center;
    flex: none;
    height: 50px;
    background: linear-gradient(to right, #d2dce5 40%, #d6d8db 50%, #d6d8db 55%, #d2dce5 65%);
}

.win-logo {
    margin: 0 21px 0 20px;
}

.search {
    display: flex;
    align-items: center;
    width: 358px;
    height: 50px;
    padding-left: 13px;
    border: 1px solid #c8c8c8;
    background: #fff;
}

.search-text {
    margin-left: 10px;
    font-size: 18px;
    letter-spacing: -0.1px;
    color: #222;
}

.search-art {
    margin-left: auto;
    margin-right: 4px;
}

.task-apps {
    display: flex;
    margin-left: 2px;
}

.task-app {
    position: relative;
    display: flex;
    align-items: center;
    justify-content: center;
    width: 62px;
    height: 50px;
}

/* running-app underline, narrower than the slot unless the app is focused */
.task-open::after {
    content: "";
    position: absolute;
    bottom: 0;
    left: 5px;
    right: 6px;
    height: 3px;
    background: #0a7bd8;
}

.task-active {
    background: #eef0f2;
}

.task-active::after {
    left: 0;
    right: 0;
}

.task-thumb {
    position: absolute;
    right: 10px;
    bottom: 5px;
    width: 20px;
    height: 20px;
    border-radius: 50%;
    background: rgba(200, 210, 220, 0.85);
}

.task-count {
    position: absolute;
    right: 6px;
    bottom: 3px;
    width: 22px;
    height: 22px;
    border: 1px solid #333;
    border-radius: 50%;
    background: #e2e6ea;
    font-size: 13px;
    line-height: 20px;
    text-align: center;
    letter-spacing: -0.5px;
}

.tray {
    display: flex;
    align-items: center;
    gap: 9px;
    margin-left: auto;
    padding-right: 18px;
}

.rain-text {
    margin: 0 22px 0 3px;
    font-size: 18px;
    letter-spacing: -0.5px;
    color: #222;
}

.tray-caret {
    margin-right: 7px;
}

.tray-lang {
    margin-left: 3px;
    font-size: 15px;
    letter-spacing: -0.3px;
    color: #222;
}

.clock {
    width: 100px;
    margin-left: -6px;
    font-size: 14.5px;
    line-height: 23px;
    letter-spacing: -0.4px;
    text-align: center;
    color: #222;
}

.notif {
    position: relative;
    width: 30px;
    height: 40px;
    margin-left: 8px;
    padding-top: 6px;
}

.notif-count {
    position: absolute;
    right: 0;
    bottom: 0;
    width: 22px;
    height: 22px;
    border: 1px solid #444;
    border-radius: 50%;
    background: #dfe4e8;
    font-size: 14px;
    line-height: 20px;
    text-align: center;
}
```
